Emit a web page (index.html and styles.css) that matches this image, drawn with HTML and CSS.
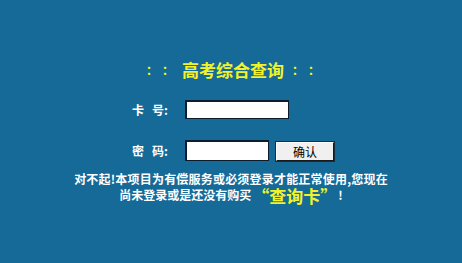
FILE: index.html
```html
<!DOCTYPE html>
<html lang="zh">
<head>
<meta charset="utf-8">
<title>高考综合查询</title>
<link rel="stylesheet" href="styles.css">
</head>
<body>
<div class="page">
  <div class="title"><span class="dot">：</span><span class="dot">：</span><span class="name">高考综合查询</span><span class="dot">：</span><span class="dot">：</span></div>
  <form class="form">
    <div class="row row1">
      <label class="lbl"><span class="c1">卡</span>号:</label>
      <input class="inp inp1" type="text">
    </div>
    <div class="row row2">
      <label class="lbl"><span class="c1">密</span>码:</label>
      <input class="inp inp2" type="password">
      <button class="btn" type="button">确认</button>
    </div>
  </form>
  <div class="msg">
    <div class="line1">对不起!本项目为有偿服务或必须登录才能正常使用,您现在</div>
    <div class="line2">尚未登录或是还没有购买<span class="card">“查询卡”</span>!</div>
  </div>
</div>
</body>
</html>
```
FILE: styles.css
```css
html, body {
  margin: 0;
  padding: 0;
  background: #156a98;
  width: 462px;
  height: 263px;
  overflow: hidden;
}
.page {
  font-family: "Noto Sans CJK SC", "Liberation Sans", sans-serif;
  color: #ffffff;
  padding-top: 59px;
}
.title {
  display: flex;
  justify-content: center;
  align-items: center;
  height: 20px;
  color: #f2f22a;
  font-weight: bold;
  padding-left: 4px;
}
.title .dot {
  font-size: 12px;
  width: 16px;
  text-align: center;
}
.title .name {
  font-size: 17px;
  margin: 0 6px 0 6px;
}
.form {
  margin: 0;
  padding-top: 21px;
}
.row {
  display: flex;
  align-items: center;
  padding-left: 132px;
}
.row1 {
  height: 19px;
}
.row2 {
  margin-top: 21px;
  height: 21px;
}
.lbl {
  width: 53px;
  font-size: 12px;
  font-weight: bold;
}
.lbl .c1 {
  margin-right: 8px;
}
.inp {
  box-sizing: border-box;
  background: #ffffff;
  border: 1px solid #0b1d2c;
  border-top-width: 2px;
  border-left-width: 2px;
  padding: 0;
  margin: 0;
}
.inp1 {
  width: 104px;
  height: 19px;
}
.inp2 {
  width: 84px;
  height: 21px;
}
.btn {
  box-sizing: border-box;
  width: 58px;
  height: 19px;
  margin: 1px 0 0 7px;
  padding: 0;
  background: #f0f0f0;
  border: 1px solid #1a1a1a;
  border-top-color: #ffffff;
  border-left-color: #ffffff;
  box-shadow: 0 0 0 1px #1a2a38;
  font-family: "Noto Sans CJK SC", sans-serif;
  font-size: 12px;
  color: #000;
  line-height: 17px;
}
.msg {
  margin-top: 10px;
  font-size: 12px;
  font-weight: bold;
  text-align: center;
  line-height: 16px;
}
.line1 {
  letter-spacing: 0.2px;
}
.line2 {
  padding-left: 0;
}
.card {
  display: inline-block;
  color: #f2f22a;
  font-size: 17px;
  line-height: 16px;
  height: 16px;
  vertical-align: top;
  margin: 1px 1px 0 1px;
  overflow: visible;
}
```
